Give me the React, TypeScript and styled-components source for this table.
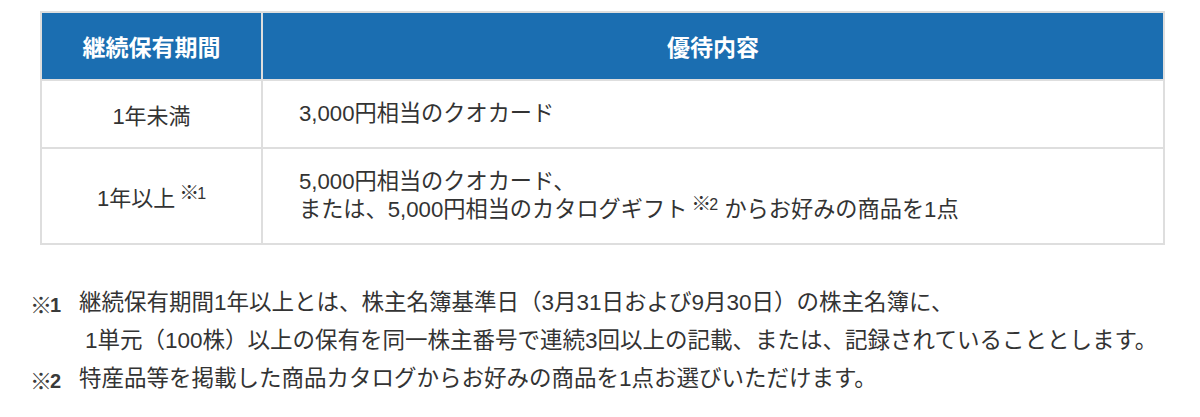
import React from "react";
import styled, { createGlobalStyle } from "styled-components";

const GlobalStyle = createGlobalStyle`
  html, body {
    margin: 0;
    padding: 0;
    background: #fff;
  }
  body {
    font-family: "Liberation Sans", "Noto Sans CJK JP", sans-serif;
    color: #333;
  }
`;

const Page = styled.div`
  width: 1200px;
  height: 417px;
  padding: 11px 0 0 40px;
  box-sizing: border-box;
`;

const Table = styled.table`
  width: 1125px;
  border-collapse: collapse;
  table-layout: fixed;
`;

const HeadCell = styled.th<{ $w?: number }>`
  width: ${(p) => (p.$w ? `${p.$w}px` : "auto")};
  height: 66px;
  padding: 0;
  background: #1b6eb1;
  border: 2px solid #dedede;
  color: #fff;
  font-size: 23px;
  font-weight: 700;
  text-align: center;
  vertical-align: middle;
`;

const Row = styled.tr<{ $h: number }>`
  height: ${(p) => p.$h}px;
`;

const TermCell = styled.td`
  padding: 0;
  border: 2px solid #dedede;
  font-size: 22px;
  text-align: center;
  vertical-align: middle;
`;

const BenefitCell = styled.td`
  padding: 0 36px;
  border: 2px solid #dedede;
  font-size: 22.2px;
  line-height: 28px;
  text-align: left;
  vertical-align: middle;
`;

const Mark = styled.sup`
  margin-left: 8px;
  font-size: 16px;
  line-height: 0;
  vertical-align: 7px;
`;

// the reference mark is drawn small inside its em box, so enlarge it and trim its side bearings
const Kome = styled.span<{ $size: number }>`
  font-family: "Noto Sans CJK JP", sans-serif;
  font-weight: 700;
  font-size: ${(p) => p.$size}px;
  margin-left: ${(p) => -Math.round(p.$size * 0.2)}px;
  margin-right: ${(p) => -Math.round(p.$size * 0.1)}px;
  vertical-align: -1px;
`;

const Notes = styled.div`
  margin: 39px 0 0 -10px;
  font-size: 22.5px;
  line-height: 38px;
`;

const Note = styled.div`
  display: grid;
  grid-template-columns: 49px 1fr;
`;

const NoteMark = styled.span`
  padding-left: 4px;
  font-size: 20px;
  font-weight: 700;
  color: #3a3a3a;
`;

const NoteLine = styled.div<{ $indent?: boolean }>`
  padding-left: ${(p) => (p.$indent ? "6px" : "0")};
  white-space: nowrap;
`;

const App = (): JSX.Element => {
  return (
    <Page>
      <GlobalStyle />
      <Table>
        <thead>
          <tr>
            <HeadCell $w={219}>継続保有期間</HeadCell>
            <HeadCell>優待内容</HeadCell>
          </tr>
        </thead>
        <tbody>
          <Row $h={68}>
            <TermCell>1年未満</TermCell>
            <BenefitCell>3,000円相当のクオカード</BenefitCell>
          </Row>
          <Row $h={96}>
            <TermCell>
              1年以上
              <Mark>
                <Kome $size={20}>※</Kome>1
              </Mark>
            </TermCell>
            <BenefitCell>
              5,000円相当のクオカード、
              <br />
              または、5,000円相当のカタログギフト
              <Mark>
                <Kome $size={20}>※</Kome>2
              </Mark>{" "}
              からお好みの商品を1点
            </BenefitCell>
          </Row>
        </tbody>
      </Table>
      <Notes>
        <Note>
          <NoteMark>
            <Kome $size={22}>※</Kome>1
          </NoteMark>
          <div>
            <NoteLine>継続保有期間1年以上とは、株主名簿基準日（3月31日および9月30日）の株主名簿に、</NoteLine>
            <NoteLine $indent>1単元（100株）以上の保有を同一株主番号で連続3回以上の記載、または、記録されていることとします。</NoteLine>
          </div>
        </Note>
        <Note>
          <NoteMark>
            <Kome $size={22}>※</Kome>2
          </NoteMark>
          <NoteLine>特産品等を掲載した商品カタログからお好みの商品を1点お選びいただけます。</NoteLine>
        </Note>
      </Notes>
    </Page>
  );
};

export default App;
